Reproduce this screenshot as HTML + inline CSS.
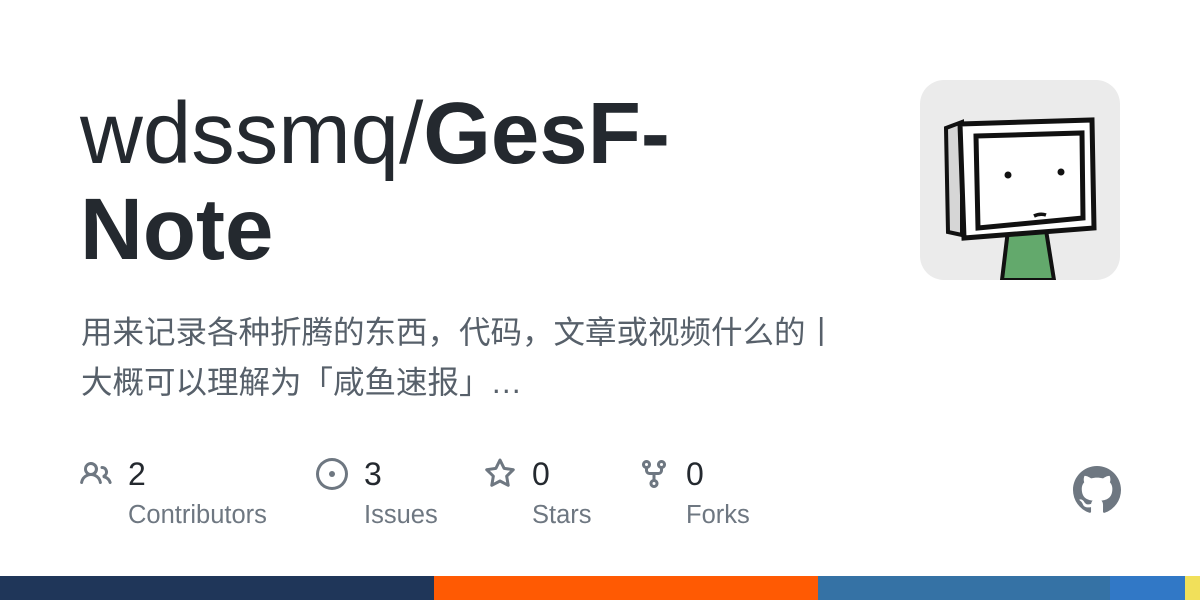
<!DOCTYPE html><html><head><meta charset="utf-8"><style>
body{margin:0;width:1200px;height:600px;background:#fff;position:relative;overflow:hidden;font-family:"Liberation Sans","Noto Sans CJK SC",sans-serif;}
.t{position:absolute;left:80px;top:86px;font-size:87px;line-height:96px;color:#24292f;letter-spacing:0px}
.t b{font-weight:700}
.d{position:absolute;left:81px;top:307px;font-size:31.5px;line-height:50px;color:#57606a;width:800px;white-space:nowrap}
.av{position:absolute;left:920px;top:80px;width:200px;height:200px;border-radius:24px;background:#ebebeb;overflow:hidden}
.st{position:absolute;top:452px}
.n{font-size:32px;color:#24292f;position:absolute;top:4px;white-space:nowrap}
.l{font-size:25.5px;color:#6e7781;position:absolute;top:49px;white-space:nowrap}
.bar{position:absolute;top:576px;height:24px}
</style></head><body>
<div class="t">wdssmq/<b>GesF-<br>Note</b></div>
<div class="d">用来记录各种折腾的东西，代码，文章或视频什么的丨<br>大概可以理解为「咸鱼速报」…</div>
<div class="av"><svg width="200" height="200" viewBox="0 0 200 200">
<path d="M82 200 L88 150 L126 150 L134 200Z" fill="#63a96c" stroke="#111" stroke-width="4"/>
<path d="M26 48 L42 42 L42 155 L28 152Z" fill="#d6d6d6" stroke="#111" stroke-width="4"/>
<path d="M40 44 L172 40 L174 148 L44 158Z" fill="#fff" stroke="#111" stroke-width="5"/>
<path d="M56 56 L162 53 L163 138 L58 148Z" fill="#fff" stroke="#111" stroke-width="5"/>
<circle cx="88" cy="95" r="3.5" fill="#111"/><circle cx="141" cy="92" r="3.5" fill="#111"/>
<path d="M114 136 Q120 133 126 135" stroke="#111" stroke-width="3.5" fill="none"/>
</svg></div>
<div class="st" style="left:80px"><svg width="32" height="32" viewBox="0 0 16 16" style="position:absolute;top:6px;left:0"><path fill="#6e7781" d="M2 5.5a3.5 3.5 0 1 1 5.898 2.549 5.508 5.508 0 0 1 3.034 4.084.75.75 0 1 1-1.482.235 4 4 0 0 0-7.9 0 .75.75 0 0 1-1.482-.236A5.507 5.507 0 0 1 3.102 8.050 3.493 3.493 0 0 1 2 5.5ZM11 4a3.001 3.001 0 0 1 2.220 5.018 5.010 5.010 0 0 1 2.560 3.012.749.749 0 0 1-.885.954.752.752 0 0 1-.549-.514 3.507 3.507 0 0 0-2.522-2.372.75.75 0 0 1-.574-.730v-.352a.75.75 0 0 1 .416-.672A1.5 1.5 0 0 0 11 5.5.75.75 0 0 1 11 4Zm-5.5-.5a2 2 0 1 0-.001 3.999A2 2 0 0 0 5.5 3.5Z"/></svg><span class="n" style="left:48px">2</span><span class="l" style="left:48px">Contributors</span></div>
<div class="st" style="left:316px"><svg width="32" height="32" viewBox="0 0 16 16" style="position:absolute;top:6px;left:0"><path fill="#6e7781" d="M8 9.5a1.5 1.5 0 1 0 0-3 1.5 1.5 0 0 0 0 3Z"/><path fill="#6e7781" d="M8 0a8 8 0 1 1 0 16A8 8 0 0 1 8 0ZM1.5 8a6.5 6.5 0 1 0 13 0 6.5 6.5 0 0 0-13 0Z"/></svg><span class="n" style="left:48px">3</span><span class="l" style="left:48px">Issues</span></div>
<div class="st" style="left:484px"><svg width="32" height="32" viewBox="0 0 16 16" style="position:absolute;top:6px;left:0"><path fill="#6e7781" d="M8 .25a.75.75 0 0 1 .673.418l1.882 3.815 4.210.612a.75.75 0 0 1 .416 1.279l-3.046 2.970.719 4.192a.751.751 0 0 1-1.088.791L8 12.347l-3.766 1.980a.75.75 0 0 1-1.088-.790l.720-4.194L.818 6.374a.75.75 0 0 1 .416-1.280l4.210-.611L7.327.668A.75.75 0 0 1 8 .25Zm0 2.445L6.615 5.5a.75.75 0 0 1-.564.410l-3.097.450 2.240 2.184a.75.75 0 0 1 .216.664l-.528 3.084 2.769-1.456a.75.75 0 0 1 .698 0l2.770 1.456-.530-3.084a.75.75 0 0 1 .216-.664l2.240-2.183-3.096-.450a.75.75 0 0 1-.564-.410L8 2.694Z"/></svg><span class="n" style="left:48px">0</span><span class="l" style="left:48px">Stars</span></div>
<div class="st" style="left:638px"><svg width="32" height="32" viewBox="0 0 16 16" style="position:absolute;top:6px;left:0"><path fill="#6e7781" d="M5 5.372v.878c0 .414.336.75.75.75h4.5a.75.75 0 0 0 .75-.75v-.878a2.25 2.25 0 1 1 1.5 0v.878a2.25 2.25 0 0 1-2.25 2.25h-1.5v2.128a2.251 2.251 0 1 1-1.5 0V8.5h-1.5A2.25 2.25 0 0 1 3.5 6.25v-.878a2.25 2.25 0 1 1 1.5 0ZM5 3.25a.75.75 0 1 0-1.5 0 .75.75 0 0 0 1.5 0Zm6.75.75a.75.75 0 1 0 0-1.5.75.75 0 0 0 0 1.5Zm-3 8.75a.75.75 0 1 0-1.5 0 .75.75 0 0 0 1.5 0Z"/></svg><span class="n" style="left:48px">0</span><span class="l" style="left:48px">Forks</span></div>
<svg width="48" height="48" viewBox="0 0 16 16" style="position:absolute;left:1073px;top:466px"><path fill="#6e7781" d="M8 0c4.42 0 8 3.58 8 8a8.013 8.013 0 0 1-5.45 7.59c-.4.08-.55-.17-.55-.38 0-.27.01-1.13.01-2.2 0-.75-.25-1.230-.54-1.48 1.78-.2 3.65-.88 3.65-3.95 0-.88-.31-1.59-.82-2.15.08-.2.36-1.02-.08-2.12 0 0-.67-.22-2.2.82-.64-.18-1.32-.27-2-.27-.68 0-1.36.09-2 .27-1.530-1.030-2.2-.82-2.2-.82-.44 1.1-.16 1.92-.08 2.12-.51.56-.82 1.28-.82 2.15 0 3.06 1.86 3.75 3.64 3.95-.23.2-.44.55-.51 1.07-.46.21-1.61.55-2.33-.66-.15-.24-.6-.83-1.23-.82-.67.01-.27.38.01.53.34.19.73.9.82 1.13.16.45.68 1.31 2.69.94 0 .67.01 1.3.01 1.49 0 .21-.15.45-.55.38A7.995 7.995 0 0 1 0 8c0-4.42 3.58-8 8-8Z"/></svg>
<div class="bar" style="left:0;width:434px;background:#1f3659"></div>
<div class="bar" style="left:434px;width:384px;background:#ff5a03"></div>
<div class="bar" style="left:818px;width:292px;background:#3572a5"></div>
<div class="bar" style="left:1110px;width:75px;background:#3178c6"></div>
<div class="bar" style="left:1185px;width:15px;background:#f1e05a"></div>
</body></html>
